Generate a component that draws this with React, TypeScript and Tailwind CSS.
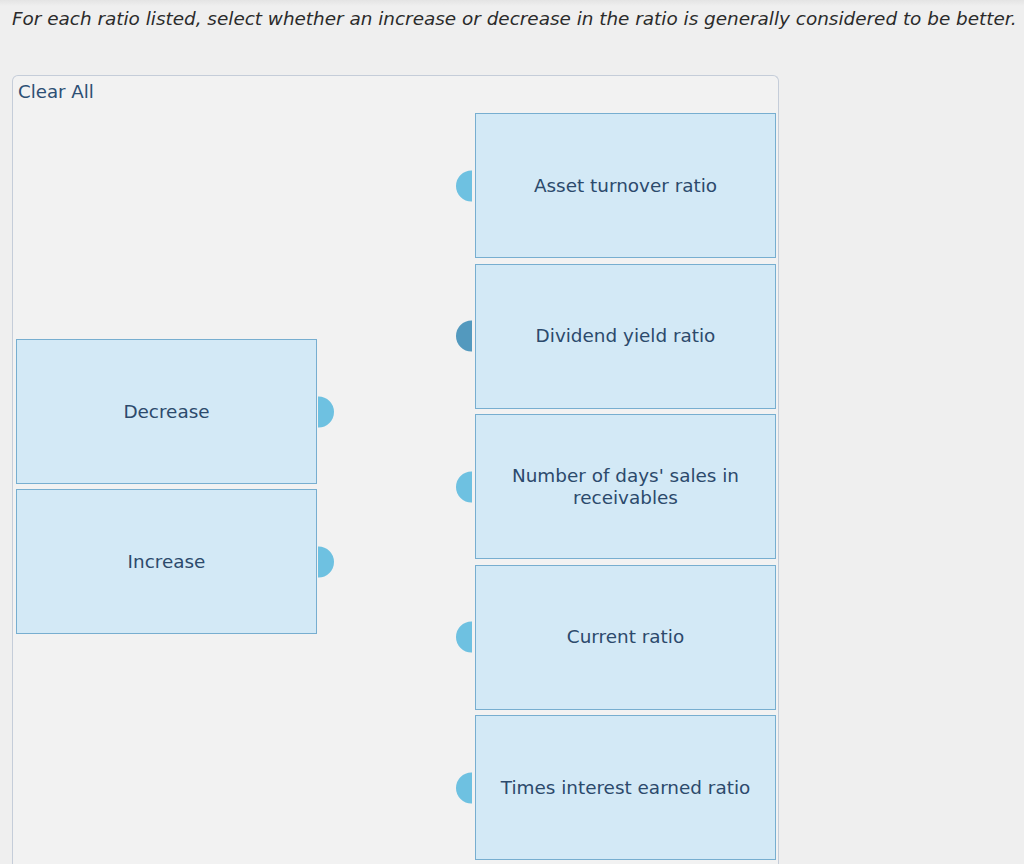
const font = "font-['DejaVu_Sans','Verdana',sans-serif]";

const choices = [
  { label: "Decrease" },
  { label: "Increase" },
];

const ratios = [
  { label: "Asset turnover ratio", active: false },
  { label: "Dividend yield ratio", active: true },
  { label: "Number of days' sales in receivables", active: false },
  { label: "Current ratio", active: false },
  { label: "Times interest earned ratio", active: false },
];

function Tab({ side, active }: { side: "left" | "right"; active?: boolean }) {
  const shape =
    side === "right"
      ? "right-[-18px] rounded-r-full"
      : "left-[-20px] rounded-l-full";
  return (
    <span
      className={`absolute top-1/2 -translate-y-1/2 w-[16px] h-[31px] ${shape} ${
        active ? "bg-[#5399be]" : "bg-[#6ec1e1]"
      }`}
    />
  );
}

function Card({
  label,
  side,
  active,
}: {
  label: string;
  side: "left" | "right";
  active?: boolean;
}) {
  return (
    <div className="relative w-[301px] h-[145px] shrink-0 border border-[#77aed0] bg-[#d3e9f6] flex items-center justify-center px-[20px]">
      <span className="text-center text-[18.4px] leading-[22px] text-[#2c4a6c]">
        {label}
      </span>
      <Tab side={side} active={active} />
    </div>
  );
}

export default function App() {
  return (
    <div
      className={`min-h-screen w-full overflow-hidden bg-[#efefef] ${font}`}
    >
      <div className="h-[6px] -mb-[6px] bg-gradient-to-b from-[#e4e4e4] to-[#efefef]" />
      <p className="pl-[12px] pt-[8px] italic text-[18.4px] leading-[22px] text-[#2b2b2b] whitespace-nowrap">
        For each ratio listed, select whether an increase or decrease in the
        ratio is generally considered to be better.
      </p>

      <div className="ml-[12px] mt-[45px] w-[767px] rounded-t-[6px] border border-b-0 border-[#c5cdd9] bg-[#f2f2f2] pb-10">
        <button className="ml-[5px] mt-[4px] text-[18.2px] leading-[24px] text-[#2d4f74]">
          Clear All
        </button>

        <div className="mt-[8px] flex items-center justify-between pl-[3px] pr-[2px]">
          <div className="flex flex-col gap-[5px]">
            {choices.map((c) => (
              <Card key={c.label} label={c.label} side="right" />
            ))}
          </div>
          <div className="flex flex-col gap-[5.5px]">
            {ratios.map((r) => (
              <Card key={r.label} label={r.label} side="left" active={r.active} />
            ))}
          </div>
        </div>
      </div>
    </div>
  );
}
